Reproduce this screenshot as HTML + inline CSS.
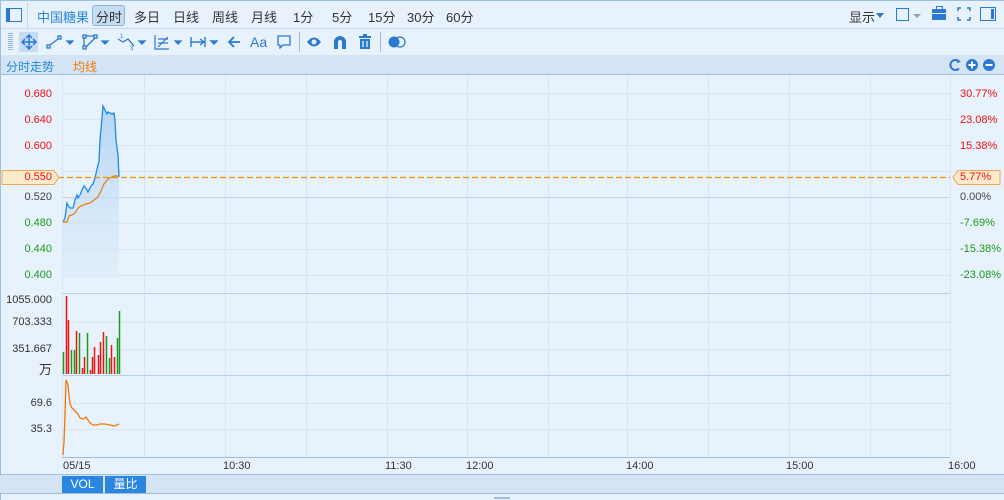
<!DOCTYPE html>
<html><head><meta charset="utf-8"><style>
body{margin:0;width:1004px;height:500px;overflow:hidden;background:#e8f2fc;font-family:"Liberation Sans","Noto Sans CJK SC",sans-serif;position:relative}
.a{position:absolute;white-space:nowrap}
.t{font-size:13px;color:#333;top:7px}
.l{font-size:11px;left:0;width:52px;text-align:right}
.r{font-size:11px;left:960px}
.x{font-size:11px;color:#333;top:460px}
</style></head><body>
<div class="a" style="left:0;top:0;width:1004px;height:1px;background:#9cc0e4"></div>
<div class="a" style="left:0;top:28px;width:1004px;height:1px;background:#c4d8ee"></div>
<div class="a" style="left:0;top:55px;width:1004px;height:19px;background:#d4e4f5;border-bottom:1px solid #9cc0e4"></div>
<div class="a" style="left:0;top:0;width:1px;height:500px;background:#9cc0e4"></div>
<div class="a" style="left:27px;top:0;width:1px;height:28px;background:#c4d8ee"></div>
<!-- top bar -->
<div class="a" style="left:6px;top:8px;width:14px;height:12px;border:1.5px solid #2a7ad2"><div style="width:3px;height:12px;background:#2a7ad2"></div></div>
<div class="a t" style="left:37px;color:#2a86d8">中国糖果</div>
<div class="a" style="left:92px;top:5px;width:31px;height:19px;background:#c6dcf2;border:1px solid #8bb4e0;border-radius:3px"></div>
<div class="a t" style="left:96px">分时</div>
<div class="a t" style="left:134px">多日</div>
<div class="a t" style="left:173px">日线</div>
<div class="a t" style="left:212px">周线</div>
<div class="a t" style="left:251px">月线</div>
<div class="a t" style="left:293px">1分</div>
<div class="a t" style="left:332px">5分</div>
<div class="a t" style="left:368px">15分</div>
<div class="a t" style="left:407px">30分</div>
<div class="a t" style="left:446px">60分</div>
<div class="a t" style="left:849px">显示</div>
<div class="a" style="left:876px;top:13px;border:4px solid transparent;border-top:5px solid #2a7ad2"></div>
<div class="a" style="left:896px;top:8px;width:11px;height:11px;border:1.5px solid #2a7ad2"></div>
<div class="a" style="left:913px;top:14px;border:4px solid transparent;border-top:4px solid #8aa0b8"></div>
<div class="a" style="left:932px;top:9px;width:14px;height:11px;background:#2a7ad2;border-radius:1px"></div>
<div class="a" style="left:936px;top:6px;width:5px;height:3px;border:1.5px solid #2a7ad2;border-bottom:none"></div>
<div class="a" style="left:932px;top:13px;width:14px;height:1px;background:#e8f2fc"></div>
<svg class="a" style="left:957px;top:7px" width="14" height="14" stroke="#2a7ad2" stroke-width="1.5" fill="none"><path d="M1 4V1h3M10 1h3v3M13 10v3h-3M4 13H1v-3"/></svg>
<div class="a" style="left:980px;top:7px;width:14px;height:12px;border:1.5px solid #2a7ad2"><div style="position:absolute;right:1px;top:1px;width:3px;height:10px;background:#2a7ad2"></div></div>
<!-- toolbar 2 -->
<div class="a" style="left:8px;top:33px;width:5px;height:18px;background:repeating-linear-gradient(#8fb8e4 0 1px,transparent 1px 2px)"></div>
<div class="a" style="left:19px;top:32px;width:19px;height:20px;background:#c6dcf2"></div>
<svg class="a" style="left:20px;top:33px" width="18" height="18" stroke="#2a7ad2" stroke-width="1.5" fill="none"><path d="M9 2v14M2 9h14M6 5l3-3 3 3M6 13l3 3 3-3M5 6L2 9l3 3M13 6l3 3-3 3"/></svg>
<svg class="a" style="left:46px;top:34px" width="28" height="16" stroke="#2a7ad2" stroke-width="1.3" fill="none"><rect x="1" y="11" width="3" height="3"/><rect x="12" y="2" width="3" height="3"/><path d="M4 11l8-6"/><path d="M21 7h6l-3 3z" fill="#2a7ad2"/></svg>
<svg class="a" style="left:82px;top:34px" width="28" height="16" stroke="#2a7ad2" stroke-width="1.3" fill="none"><rect x="1" y="1" width="3" height="3"/><rect x="12" y="1" width="3" height="3"/><rect x="1" y="12" width="3" height="3"/><path d="M4 2h8M2 4v8M13 4L4 13"/><path d="M20 7h6l-3 3z" fill="#2a7ad2"/></svg>
<svg class="a" style="left:117px;top:32px" width="30" height="18" stroke="#2a7ad2" stroke-width="1.3" fill="none"><path d="M1 7l5 3 5-3 6 7"/><path d="M22 9h6l-3 3z" fill="#2a7ad2"/><text x="3" y="6" font-size="6" fill="#2a7ad2" stroke="none">1</text><text x="13" y="18" font-size="6" fill="#2a7ad2" stroke="none">3</text></svg>
<svg class="a" style="left:154px;top:33px" width="30" height="18" stroke="#2a7ad2" stroke-width="1.2" fill="none"><path d="M1 2v14h14M4 6h10M4 10h10M4 14l10-10"/><path d="M21 8h6l-3 3z" fill="#2a7ad2"/></svg>
<svg class="a" style="left:190px;top:34px" width="28" height="16" stroke="#2a7ad2" stroke-width="1.4" fill="none"><path d="M1 3v10M15 3v10M1 8h13M10 5l4 3-4 3"/><path d="M21 7h6l-3 3z" fill="#2a7ad2"/></svg>
<svg class="a" style="left:227px;top:35px" width="14" height="14" stroke="#2a7ad2" stroke-width="1.8" fill="none"><path d="M13 7H2M7 2L2 7l5 5"/></svg>
<div class="a" style="left:250px;top:34px;font-size:14px;color:#2a7ad2">Aa</div>
<svg class="a" style="left:277px;top:35px" width="14" height="14" stroke="#2a7ad2" stroke-width="1.3" fill="none"><path d="M1 1h12v9H6l-3 3v-3H1z"/></svg>
<div class="a" style="left:299px;top:32px;width:1px;height:20px;background:#9cc0e4"></div>
<svg class="a" style="left:306px;top:36px" width="16" height="12"><path d="M1 6Q8-3 15 6Q8 15 1 6z" fill="#2a7ad2"/><circle cx="8" cy="6" r="2.5" fill="#e8f2fc"/></svg>
<svg class="a" style="left:333px;top:35px" width="14" height="14"><path d="M1 14V7a6 6 0 0 1 12 0v7h-4V7a2 2 0 0 0-4 0v7z" fill="#2a7ad2"/></svg>
<svg class="a" style="left:358px;top:34px" width="14" height="16" fill="#2a7ad2"><rect x="1" y="2" width="12" height="2"/><rect x="5" y="0" width="4" height="2"/><path d="M2 5h10v10H2z"/><path d="M5 7v6M9 7v6" stroke="#e8f2fc" stroke-width="1.3"/></svg>
<div class="a" style="left:380px;top:32px;width:1px;height:20px;background:#9cc0e4"></div>
<svg class="a" style="left:388px;top:36px" width="18" height="12"><circle cx="6" cy="6" r="5.5" fill="#2a7ad2"/><circle cx="12" cy="6" r="5" fill="none" stroke="#2a7ad2" stroke-width="1.3"/></svg>
<!-- header strip -->
<div class="a" style="left:6px;top:58px;font-size:12px;color:#1e8ad8">分时走势</div>
<div class="a" style="left:73px;top:58px;font-size:12px;color:#f07800">均线</div>
<svg class="a" style="left:948px;top:58px" width="54" height="14"><path d="M11 3.5A5 5 0 1 0 11 10.5" stroke="#2a7ad2" stroke-width="2" fill="none"/><path d="M9 1l4 3-4 1z" fill="#2a7ad2"/><circle cx="24" cy="7" r="6" fill="#2a7ad2"/><path d="M20.5 7h7M24 3.5v7" stroke="#fff" stroke-width="2"/><circle cx="41" cy="7" r="6" fill="#2a7ad2"/><path d="M37.5 7h7" stroke="#fff" stroke-width="2"/></svg>
<!-- chart grid -->
<svg class="a" style="left:0;top:75px" width="1004" height="425">
<g stroke="#d6e6f5" stroke-width="1">
<path d="M62.5 0v382M144.5 0v382M225.5 0v382M306.5 0v382M387.5 0v382M467.5 0v382M548.5 0v382M627.5 0v382M708.5 0v382M789.5 0v382M870.5 0v382M950.5 0v382"/>
<path d="M62 18.5h888M62 44.5h888M62 70.5h888M62 96.5h888M62 148.5h888M62 174.5h888M62 200.5h888"/>
<path d="M62 247.5h888M62 274.5h888M62 328.5h888M62 354.5h888"/>
</g>
<path d="M62 122.5h888" stroke="#c4d4e8"/>
<path d="M62 218.5h888M62 300.5h888" stroke="#b9d0e8"/>
<path d="M62 382.5h888" stroke="#9cc0e4"/>
</svg>
<div class="a" style="left:0;top:474px;width:1004px;height:18px;background:#d4e4f5;border-top:1px solid #9cc0e4;border-bottom:1px solid #9cc0e4"></div>
<svg class="a" style="left:0;top:0" width="1004" height="500">
<defs><linearGradient id="g" x1="0" y1="0" x2="0" y2="1"><stop offset="0" stop-color="#a8cdf2" stop-opacity=".8"/><stop offset="1" stop-color="#dcecfa" stop-opacity=".5"/></linearGradient></defs>
<path d="M63 222L65 218L67 203L69 207L70 208L73 208L75 200L77 195L78 198L80 195L82 190L84 186L87 190L88 192L91 186L93 184L95 178L97 169L99 161L100 140L102 118L103 106L105 110L107 114L108 112L110 113L112 114L114 113L115 120L116 140L118 155L119 177V278H63Z" fill="url(#g)"/>
<path d="M63 222L65 218L67 203L69 207L70 208L73 208L75 200L77 195L78 198L80 195L82 190L84 186L87 190L88 192L91 186L93 184L95 178L97 169L99 161L100 140L102 118L103 106L105 110L107 114L108 112L110 113L112 114L114 113L115 120L116 140L118 155L119 177" fill="none" stroke="#1e8ae6" stroke-width="1.3"/>
<path d="M63 222L67 222L69 216L72 215L75 213L78 208L81 206L86 204L90 203L94 200L97 198L100 193L104 184L107 180L110 178L114 176L118 176" fill="none" stroke="#f07800" stroke-width="1.2"/>
<path d="M58 177.5H950" stroke="#f0900a" stroke-width="1.2" stroke-dasharray="6,3"/>
<g stroke-width="1.5">
<path d="M63.5 374V352M71.5 374V350M74.5 374V350M79.5 374V333M87.5 374V333M106.5 374V336M109.5 374V358M117.5 374V338M119.5 374V311" stroke="#1a9a1a"/>
<path d="M66.5 374V296M68.5 374V320M76.5 374V331M82.5 374V368M84.5 374V357M90.5 374V370M92.5 374V357M94.5 374V347M98.5 374V355M100.5 374V342M103.5 374V332M111.5 374V345M114.5 374V357" stroke="#ee1111"/>
</g>
<path d="M63 455L64 442L65 415L66 380L67 382L68 385L69 395L70 404L72 408L75 411L78 414L80 418L83 419L86 417L88 420L90 423L93 425L97 425L100 424L105 424L110 425L114 426L117 425L119 424" fill="none" stroke="#f07800" stroke-width="1.3"/>
<path d="M2 170.5h52l5 7-5 7H2z" fill="#fde9cc" stroke="#f0a850"/>
<path d="M958 170.5h42v14h-42l-5-7z" fill="#fde9cc" stroke="#f0a850"/>
</svg>
<div class="a l" style="top:88px;color:#ee1111">0.680</div>
<div class="a l" style="top:114px;color:#ee1111">0.640</div>
<div class="a l" style="top:140px;color:#ee1111">0.600</div>
<div class="a l" style="top:171px;color:#ee1111">0.550</div>
<div class="a l" style="top:191px;color:#444">0.520</div>
<div class="a l" style="top:217px;color:#1a9a1a">0.480</div>
<div class="a l" style="top:243px;color:#1a9a1a">0.440</div>
<div class="a l" style="top:269px;color:#1a9a1a">0.400</div>
<div class="a r" style="top:88px;color:#ee1111">30.77%</div>
<div class="a r" style="top:114px;color:#ee1111">23.08%</div>
<div class="a r" style="top:140px;color:#ee1111">15.38%</div>
<div class="a r" style="top:171px;color:#ee1111">5.77%</div>
<div class="a r" style="top:191px;color:#444">0.00%</div>
<div class="a r" style="top:217px;color:#1a9a1a">-7.69%</div>
<div class="a r" style="top:243px;color:#1a9a1a">-15.38%</div>
<div class="a r" style="top:269px;color:#1a9a1a">-23.08%</div>
<div class="a l" style="top:294px;color:#333">1055.000</div>
<div class="a l" style="top:316px;color:#333">703.333</div>
<div class="a l" style="top:343px;color:#333">351.667</div>
<div class="a l" style="top:359px;color:#333;font-size:13px">万</div>
<div class="a l" style="top:397px;color:#333">69.6</div>
<div class="a l" style="top:423px;color:#333">35.3</div>
<div class="a x" style="left:63px">05/15</div>
<div class="a x" style="left:223px">10:30</div>
<div class="a x" style="left:385px">11:30</div>
<div class="a x" style="left:466px">12:00</div>
<div class="a x" style="left:626px">14:00</div>
<div class="a x" style="left:786px">15:00</div>
<div class="a x" style="left:948px">16:00</div>
<div class="a" style="left:62px;top:476px;width:41px;height:17px;background:#2a86e0;color:#fff;font-size:12px;text-align:center;line-height:17px">VOL</div>
<div class="a" style="left:105px;top:476px;width:41px;height:17px;background:#2a86e0;color:#fff;font-size:12px;text-align:center;line-height:17px">量比</div>
<div class="a" style="left:494px;top:497px;width:16px;height:2px;background:#9cc0e4"></div>
</body></html>
